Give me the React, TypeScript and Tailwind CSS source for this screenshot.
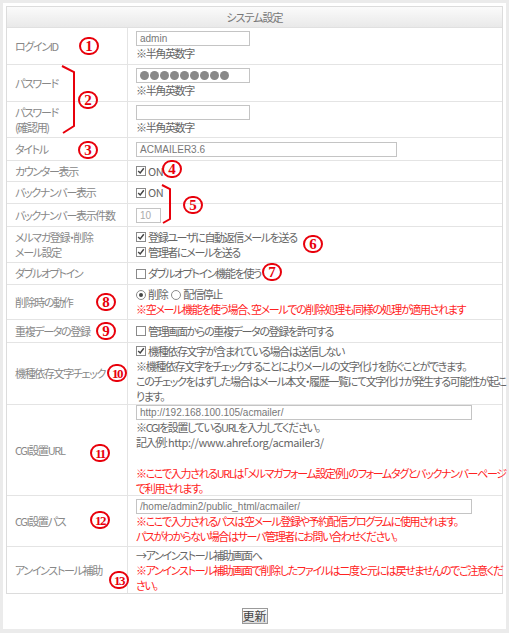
import * as React from "react";

const Check = ({ on = false }: { on?: boolean }) => (
  <span className="mr-[2px] inline-flex h-[10px] w-[10px] shrink-0 items-center justify-center border border-[#8a8a8a] bg-white">
    {on && (
      <svg viewBox="0 0 10 10" className="h-[8px] w-[8px]">
        <path d="M1.5 5 L4 7.5 L8.5 1.5" fill="none" stroke="#444" strokeWidth="1.8" />
      </svg>
    )}
  </span>
);

const Radio = ({ on = false }: { on?: boolean }) => (
  <span className="mr-[2px] inline-flex h-[10px] w-[10px] shrink-0 items-center justify-center rounded-full border border-[#8a8a8a] bg-white">
    {on && <span className="h-[4px] w-[4px] rounded-full bg-[#444]" />}
  </span>
);

const Field = ({ value, className }: { value: string; className: string }) => (
  <div
    className={
      "h-[15px] border border-[#c4c4c4] bg-white px-[3px] font-['Liberation_Sans',sans-serif] text-[10px] leading-[13px] tracking-normal text-[#777] " +
      className
    }
  >
    {value}
  </div>
);

const Row = ({
  label,
  h,
  last = false,
  children,
}: {
  label: React.ReactNode;
  h: string;
  last?: boolean;
  children: React.ReactNode;
}) => (
  <div className={"flex " + h + (last ? "" : " border-b border-[#e4e4e4]")}>
    <div className="flex w-[121px] shrink-0 items-center border-r border-[#e4e4e4] pl-[8px] text-[#888]">
      <div className="whitespace-nowrap">{label}</div>
    </div>
    <div className="flex min-w-0 flex-1 flex-col justify-center pl-[8px]">{children}</div>
  </div>
);

const Num = ({ n, className }: { n: number; className: string }) => (
  <span
    className={
      "absolute flex h-[18px] w-[20px] items-center justify-center rounded-full border-2 border-[#e8000b] bg-transparent font-['Liberation_Serif',serif] font-bold leading-none text-[#e8000b] " +
      (n > 9 ? "text-[13px] tracking-[-1.5px] " : "text-[15px] tracking-normal ") +
      className
    }
  >
    {n}
  </span>
);

export default function App() {
  return (
    <div className="relative min-h-[633px] w-[509px] bg-[#ebebeb] p-[3px] font-['Noto_Sans_CJK_JP',sans-serif] text-[11px] leading-[15px] tracking-[-1.35px] text-[#666] [font-feature-settings:'palt']">
      <div className="w-[503px] bg-white px-[3px] pt-[3px] pb-[5px]">
        <div className="border border-[#dcdcdc]">
          <div className="flex h-[21px] items-center justify-center border-b border-[#e0e0e0] bg-gradient-to-b from-[#fbfbfb] to-[#e9e9e9] tracking-[-1px] text-[#777]">
            システム設定
          </div>

          <Row label="ログインID" h="h-[37px]">
            <Field value="admin" className="w-[114px]" />
            <div>※半角英数字</div>
          </Row>
          <Row label="パスワード" h="h-[37px]">
            <div className="flex h-[15px] w-[114px] items-center gap-[1px] border border-[#c4c4c4] bg-white px-[3px]">
              {Array.from({ length: 9 }).map((_, i) => (
                <span key={i} className="h-[9px] w-[9px] rounded-full bg-[#888]" />
              ))}
            </div>
            <div>※半角英数字</div>
          </Row>
          <Row
            label={
              <>
                パスワード
                <br />
                (確認用)
              </>
            }
            h="h-[36px]"
          >
            <Field value="" className="w-[114px]" />
            <div>※半角英数字</div>
          </Row>
          <Row label="タイトル" h="h-[23px]">
            <Field value="ACMAILER3.6" className="w-[261px]" />
          </Row>
          <Row label="カウンター表示" h="h-[21px]">
            <div className="flex items-center tracking-[-0.5px]">
              <Check on />
              ON
            </div>
          </Row>
          <Row label="バックナンバー表示" h="h-[22px]">
            <div className="flex items-center tracking-[-0.5px]">
              <Check on />
              ON
            </div>
          </Row>
          <Row label="バックナンバー表示件数" h="h-[23px]">
            <Field value="10" className="w-[25px] text-[#aaa]" />
          </Row>
          <Row
            label={
              <>
                メルマガ登録・削除
                <br />
                メール設定
              </>
            }
            h="h-[36px]"
          >
            <div className="flex items-center">
              <Check on />
              登録ユーザに自動返信メールを送る
            </div>
            <div className="flex items-center">
              <Check on />
              管理者にメールを送る
            </div>
          </Row>
          <Row label="ダブルオプトイン" h="h-[22px]">
            <div className="flex items-center">
              <Check />
              ダブルオプトイン機能を使う
            </div>
          </Row>
          <Row label="削除時の動作" h="h-[35px]">
            <div className="flex items-center">
              <Radio on />
              削除
              <span className="ml-[4px]" />
              <Radio />
              配信停止
            </div>
            <div className="whitespace-nowrap text-[#f22]">
              ※空メール機能を使う場合、空メールでの削除処理も同様の処理が適用されます
            </div>
          </Row>
          <Row label="重複データの登録" h="h-[23px]">
            <div className="flex items-center">
              <Check />
              管理画面からの重複データの登録を許可する
            </div>
          </Row>
          <Row label="機種依存文字チェック" h="h-[62px]">
            <div className="flex items-center">
              <Check on />
              機種依存文字が含まれている場合は送信しない
            </div>
            <div className="whitespace-nowrap">
              ※機種依存文字をチェックすることによりメールの文字化けを防ぐことができます。
              <br />
              このチェックをはずした場合はメール本文・履歴一覧にて文字化けが発生する可能性が起こ
              <br />
              ります。
            </div>
          </Row>
          <Row label="CGI設置URL" h="h-[91px]">
            <Field value="http://192.168.100.105/acmailer/" className="w-[336px]" />
            <div className="whitespace-nowrap">
              ※CGIを設置しているURLを入力してください。
              <br />
              記入例
              <span className="font-['Liberation_Sans',sans-serif] tracking-normal">:</span>
              <span className="tracking-[-0.4px]">http://www.ahref.org/acmailer3/</span>
              <br />
              <br />
              <span className="text-[#f22]">
                ※ここで入力されるURLは「メルマガフォーム設定例」のフォームタグとバックナンバーページ
                <br />
                で利用されます。
              </span>
            </div>
          </Row>
          <Row label="CGI設置パス" h="h-[51px]">
            <Field value="/home/admin2/public_html/acmailer/" className="w-[336px]" />
            <div className="whitespace-nowrap text-[#f22]">
              ※ここで入力されるパスは空メール登録や予約配信プログラムに使用されます。
              <br />
              パスがわからない場合はサーバ管理者にお問い合わせください。
            </div>
          </Row>
          <Row label="アンインストール補助" h="h-[46px]" last>
            <div className="whitespace-nowrap">
              →アンインストール補助画面へ
              <br />
              <span className="text-[#f22]">
                ※アンインストール補助画面で削除したファイルは二度と元には戻せませんのでご注意くだ
                <br />
                さい。
              </span>
            </div>
          </Row>
        </div>

        <div className="flex justify-center pt-[14px]">
          <button
            type="button"
            className="h-[16px] w-[26px] border border-[#9a9a9a] bg-gradient-to-b from-[#fdfdfd] to-[#dcdcdc] text-[12px] leading-[14px] tracking-normal text-[#444]"
          >
            更新
          </button>
        </div>
      </div>

      {/* annotations */}
      <svg className="pointer-events-none absolute left-0 top-0 h-[633px] w-[509px]" viewBox="0 0 509 633">
        <polyline points="62,66 74,72 74,126 63,133" fill="none" stroke="#e8000b" strokeWidth="2" />
        <polyline points="162,185 170,189 170,219 163,223" fill="none" stroke="#e8000b" strokeWidth="2" />
      </svg>
      <Num n={1} className="left-[79px] top-[37px]" />
      <Num n={2} className="left-[78px] top-[91px]" />
      <Num n={3} className="left-[78px] top-[141px]" />
      <Num n={4} className="left-[162px] top-[160px]" />
      <Num n={5} className="left-[183px] top-[196px]" />
      <Num n={6} className="left-[303px] top-[235px]" />
      <Num n={7} className="left-[262px] top-[263px]" />
      <Num n={8} className="left-[96px] top-[293px]" />
      <Num n={9} className="left-[96px] top-[322px]" />
      <Num n={10} className="left-[107px] top-[364px]" />
      <Num n={11} className="left-[90px] top-[444px]" />
      <Num n={12} className="left-[90px] top-[511px]" />
      <Num n={13} className="left-[109px] top-[571px]" />
    </div>
  );
}
